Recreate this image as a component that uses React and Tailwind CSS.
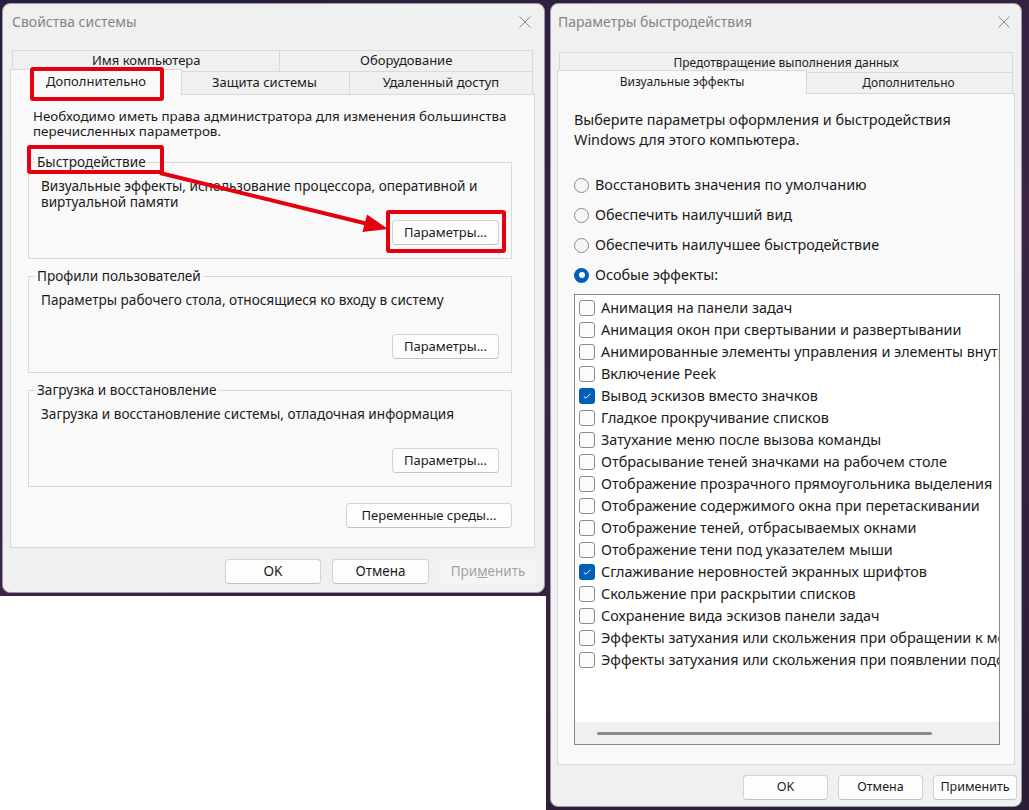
import React from "react";

const effects = [
  { label: "Анимация на панели задач", checked: false },
  { label: "Анимация окон при свертывании и развертывании", checked: false },
  { label: "Анимированные элементы управления и элементы внутри окна", checked: false },
  { label: "Включение Peek", checked: false },
  { label: "Вывод эскизов вместо значков", checked: true },
  { label: "Гладкое прокручивание списков", checked: false },
  { label: "Затухание меню после вызова команды", checked: false },
  { label: "Отбрасывание теней значками на рабочем столе", checked: false },
  { label: "Отображение прозрачного прямоугольника выделения", checked: false },
  { label: "Отображение содержимого окна при перетаскивании", checked: false },
  { label: "Отображение теней, отбрасываемых окнами", checked: false },
  { label: "Отображение тени под указателем мыши", checked: false },
  { label: "Сглаживание неровностей экранных шрифтов", checked: true },
  { label: "Скольжение при раскрытии списков", checked: false },
  { label: "Сохранение вида эскизов панели задач", checked: false },
  { label: "Эффекты затухания или скольжения при обращении к меню", checked: false },
  { label: "Эффекты затухания или скольжения при появлении подсказок", checked: false },
];

const radios = [
  { label: "Восстановить значения по умолчанию", checked: false },
  { label: "Обеспечить наилучший вид", checked: false },
  { label: "Обеспечить наилучшее быстродействие", checked: false },
  { label: "Особые эффекты:", checked: true },
];

const CloseIcon = () => (
  <svg width="12" height="12" viewBox="0 0 12 12" className="shrink-0">
    <path d="M0.5 0.5L11.5 11.5M11.5 0.5L0.5 11.5" stroke="#8a8a8a" strokeWidth="1" />
  </svg>
);

const Button = ({ className = "", disabled, children }) => (
  <button
    className={`h-[25px] rounded-[4px] border flex items-center justify-center ${
      disabled
        ? "bg-[#f5f5f5] border-[#f5f5f5] text-[#a3a3a3]"
        : "bg-[#fdfdfd] border-[#d3d3d3] border-b-[#c2c2c2] text-[#1b1b1b]"
    } ${className}`}
  >
    {children}
  </button>
);

const Tab = ({ label, selected, className = "" }) =>
  selected ? (
    <div
      className={`relative z-10 -mx-[2px] -mt-[2px] -mb-[1px] bg-[#f9f9f9] border-t border-l border-r border-[#d9d9d9] flex items-center justify-center pb-[2px] ${className}`}
    >
      {label}
    </div>
  ) : (
    <div
      className={`border-t border-r border-[#d9d9d9] flex items-center justify-center ${className}`}
    >
      {label}
    </div>
  );

// group box with legend and a "Параметры..." button at bottom right
const Group = ({ title, text, className = "" }) => (
  <fieldset
    className={`w-[484px] border border-[#dadada] pl-[6px] pr-[12px] pb-[13px] ${className}`}
  >
    <legend className="px-[2px] leading-[16px] text-[13.6px]">{title}</legend>
    <div className="h-[67px] mt-[8px] flex flex-col justify-between">
      <div className="pl-[6px] leading-[16px] text-[13.6px]">{text}</div>
      <Button className="w-[107px] self-end">Параметры...</Button>
    </div>
  </fieldset>
);

const SystemProperties = () => (
  <div className="w-[543px] h-[590px] rounded-[8px] bg-[#f0f0f0] border border-[#9d98a3] flex flex-col text-[13px] text-[#1b1b1b]">
    <div className="h-[46px] pt-[9px] pl-[9px] pr-[13px] flex justify-between">
      <div className="h-[18px] leading-[18px] text-[14px] text-[#858585]">Свойства системы</div>
      <div className="h-[18px] flex items-center">
        <CloseIcon />
      </div>
    </div>

    {/* tabs */}
    <div className="ml-[9px] mr-[11px] flex flex-col">
      <div className="h-[21px] flex border-l border-[#d9d9d9]">
        <Tab label="Имя компьютера" className="w-[268px]" />
        <Tab label="Оборудование" className="w-[253px]" />
      </div>
      <div className="h-[23px] flex">
        <Tab label="Дополнительно" selected className="w-[172px] h-[26px]" />
        <Tab label="Защита системы" className="w-[170px]" />
        <Tab label="Удаленный доступ" className="w-[183px]" />
      </div>
    </div>
    <div className="ml-[7px] w-[525px] h-[454px] bg-[#f9f9f9] border border-[#d9d9d9] pt-[14px] pl-[22px]">
      <div className="leading-[15px] text-[13.4px] whitespace-nowrap">
        Необходимо иметь права администратора для изменения большинства
        <br />
        перечисленных параметров.
      </div>
      <Group
        className="mt-[15px] -ml-[5px]"
        title="Быстродействие"
        text={
          <>
            Визуальные эффекты, использование процессора, оперативной и
            <br />
            виртуальной памяти
          </>
        }
      />
      <Group
        className="mt-[9px] -ml-[5px]"
        title="Профили пользователей"
        text="Параметры рабочего стола, относящиеся ко входу в систему"
      />
      <Group
        className="mt-[9px] -ml-[5px]"
        title="Загрузка и восстановление"
        text="Загрузка и восстановление системы, отладочная информация"
      />
      <div className="w-[479px] flex justify-end mt-[16px]">
        <Button className="w-[166px]">Переменные среды...</Button>
      </div>
    </div>

    <div className="mt-[11px] pr-[8px] flex justify-end gap-[11px] text-[13.5px]">
      <Button className="w-[96px]">OK</Button>
      <Button className="w-[97px]">Отмена</Button>
      <Button className="w-[96px]" disabled>
        <span>
          При<span className="underline">м</span>енить
        </span>
      </Button>
    </div>
  </div>
);

const Radio = ({ checked }) =>
  checked ? (
    <div className="w-[15px] h-[15px] rounded-full bg-[#005fb8] flex items-center justify-center shrink-0">
      <div className="w-[6px] h-[6px] rounded-full bg-white" />
    </div>
  ) : (
    <div className="w-[15px] h-[15px] rounded-full border border-[#8b8b8b] bg-[#f6f6f6] shrink-0" />
  );

const Checkbox = ({ checked }) =>
  checked ? (
    <div className="w-[16px] h-[16px] rounded-[3px] bg-[#005fb8] flex items-center justify-center shrink-0">
      <svg width="10" height="10" viewBox="0 0 10 10">
        <path d="M1.8 5.2L4 7.3L8.3 2.8" fill="none" stroke="#fff" strokeWidth="1" />
      </svg>
    </div>
  ) : (
    <div className="w-[16px] h-[16px] rounded-[3px] border border-[#8b8b8b] bg-[#fbfbfb] shrink-0" />
  );

const PerformanceOptions = () => (
  <div className="w-[472px] h-[804px] rounded-[8px] bg-[#f0f0f0] border border-[#9d98a3] flex flex-col text-[14.4px] text-[#1b1b1b]">
    <div className="h-[48px] pt-[9px] pl-[7px] pr-[11px] flex justify-between">
      <div className="h-[18px] leading-[18px] text-[14px] text-[#858585]">Параметры быстродействия</div>
      <div className="h-[18px] flex items-center">
        <CloseIcon />
      </div>
    </div>

    {/* tabs */}
    <div className="ml-[8px] mr-[8px] flex flex-col text-[12px]">
      <div className="h-[20px] flex border-l border-[#d9d9d9]">
        <Tab label="Предотвращение выполнения данных" className="w-[454px]" />
      </div>
      <div className="h-[21px] flex">
        <Tab label="Визуальные эффекты" selected className="w-[250px] h-[24px]" />
        <Tab label="Дополнительно" className="w-[208px]" />
      </div>
    </div>
    <div className="ml-[6px] w-[458px] h-[672px] bg-[#f9f9f9] border border-[#d9d9d9] pt-[16px] pl-[16px]">
      <div className="leading-[20px]">
        Выберите параметры оформления и быстродействия
        <br />
        Windows для этого компьютера.
      </div>
      <div className="mt-[20px] flex flex-col">
        {radios.map((r) => (
          <div key={r.label} className="h-[30px] flex items-center gap-[6px]">
            <Radio checked={r.checked} />
            <span>{r.label}</span>
          </div>
        ))}
      </div>
      <div className="mt-[4px] w-[426px] h-[451px] bg-white border border-[#868686] flex flex-col overflow-hidden">
        <div className="flex-1 pt-[2px] pl-[4px] overflow-hidden">
          {effects.map((e) => (
            <div key={e.label} className="h-[22px] flex items-center gap-[6px] whitespace-nowrap">
              <Checkbox checked={e.checked} />
              <span>{e.label}</span>
            </div>
          ))}
        </div>
        <div className="h-[22px] bg-[#f0f0f0] flex items-center pl-[22px]">
          <div className="w-[335px] h-[3px] rounded-full bg-[#8a8a8a]" />
        </div>
      </div>
    </div>

    <div className="mt-[10px] pr-[4px] flex justify-end gap-[10px] text-[12.5px]">
      <Button className="w-[85px]">OK</Button>
      <Button className="w-[85px]">Отмена</Button>
      <Button className="w-[84px]">Применить</Button>
    </div>
  </div>
);

export default function App() {
  return (
    <div className="relative w-[1029px] h-[810px] overflow-hidden bg-[linear-gradient(160deg,#2a1d3d_0%,#3b2446_50%,#2a1d35_100%)] flex font-['Noto_Sans',sans-serif]">
      <div className="w-[550px] flex flex-col">
        <div className="pt-[3px] pl-[2px]">
          <SystemProperties />
        </div>
        <div className="mt-[3px] w-[546px] flex-1 bg-white" />
      </div>
      <div className="pt-[3px]">
        <PerformanceOptions />
      </div>

      {/* red annotations */}
      <svg className="absolute left-0 top-0 z-20 pointer-events-none" width="1029" height="810">
        <g fill="none" stroke="#e4000f" strokeWidth="4" strokeLinejoin="round">
          <rect x="32" y="69" width="130" height="30" rx="1" />
          <rect x="29" y="147" width="133" height="25" rx="1" />
          <rect x="388" y="212" width="116" height="39" rx="1" />
          <line x1="160" y1="173" x2="368" y2="224" />
        </g>
        <polygon points="388,229 367,214.5 362.5,232" fill="#e4000f" />
      </svg>
    </div>
  );
}
